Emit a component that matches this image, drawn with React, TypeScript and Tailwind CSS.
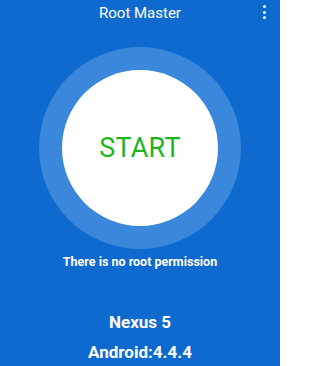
export default function App() {
  return (
    <div
      className="w-[280px] h-[366px] bg-[#0f6ad0] text-white flex flex-col items-center relative overflow-hidden"
      style={{ fontFamily: 'Roboto, "Liberation Sans", sans-serif' }}
    >
      <div className="w-full h-[25px] flex items-center justify-center text-[15px] leading-[18px]">
        Root Master
      </div>
      <div className="absolute right-[14px] top-[5px] flex flex-col gap-[2.5px]">
        <span className="block w-[3px] h-[3px] rounded-full bg-white" />
        <span className="block w-[3px] h-[3px] rounded-full bg-white" />
        <span className="block w-[3px] h-[3px] rounded-full bg-white" />
      </div>
      <div className="mt-[22px] w-[202px] h-[202px] rounded-full bg-[#3a87db] flex items-center justify-center">
        <div className="w-[156px] h-[156px] rounded-full bg-white flex items-center justify-center">
          <span className="text-[27px] leading-[32px] text-[#1fb51f] tracking-[0.2px]">START</span>
        </div>
      </div>
      <div className="mt-[6px] text-[12.5px] leading-[14px] font-bold">There is no root permission</div>
      <div className="mt-[43px] text-[17px] leading-[20px] font-bold">Nexus 5</div>
      <div className="mt-[10px] text-[17px] leading-[20px] font-bold">Android:4.4.4</div>
    </div>
  );
}
